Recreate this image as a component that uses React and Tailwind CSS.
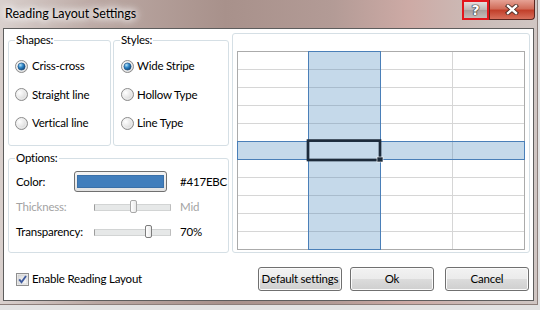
import React from "react";

const Radio = ({ checked, id }) => (
  <svg width="13" height="13" viewBox="0 0 13 13" className="shrink-0">
    <defs>
      <radialGradient id={`${id}-bg`} cx="0.35" cy="0.35" r="0.75">
        <stop offset="0" stopColor="#ffffff" />
        <stop offset="0.6" stopColor="#e4e4e4" />
        <stop offset="1" stopColor="#c8c8c8" />
      </radialGradient>
      <radialGradient id={`${id}-dot`} cx="0.35" cy="0.3" r="0.8">
        <stop offset="0" stopColor="#b5e4fb" />
        <stop offset="0.45" stopColor="#2f86c7" />
        <stop offset="1" stopColor="#0c3c6e" />
      </radialGradient>
    </defs>
    <circle cx="6.5" cy="6.5" r="6" fill={`url(#${id}-bg)`} stroke="#8c8c8c" />
    <circle cx="6.5" cy="6.5" r="4.6" fill="none" stroke="#f4f4f4" strokeWidth="0.8" />
    {checked && (
      <circle cx="6.5" cy="6.5" r="3.6" fill={`url(#${id}-dot)`} stroke="#1a4a7a" strokeWidth="0.6" />
    )}
  </svg>
);

const Option = ({ id, label, checked, gap = "gap-[4px]" }) => (
  <div className={`flex items-center h-[16px] ${gap}`}>
    <Radio id={id} checked={checked} />
    <span className="leading-[16px] whitespace-nowrap">{label}</span>
  </div>
);

const Group = ({ label, className = "", children }) => (
  <fieldset className={`border border-[#d5dfe5] rounded-[3px] min-w-0 ${className}`}>
    <legend className="ml-[6px] px-[1px] leading-[16px]">{label}</legend>
    {children}
  </fieldset>
);

const Slider = ({ pos, disabled }) => (
  <div className="relative w-[77px] h-[16px] flex items-center">
    <div className="w-full h-[7px] bg-[#e6e8e8] border border-[#d2d4d4] border-l-[#9c9c9c] border-r-[#bdbdbd]" />
    <div
      className={`absolute top-[1px] ${pos} w-[7px] h-[13px] rounded-[2px] border ${
        disabled ? "border-[#a8a8a8]" : "border-[#7c7c7c]"
      } bg-[linear-gradient(90deg,#ffffff,#e9e9e9)]`}
    />
  </div>
);

const Btn = ({ children }) => (
  <button className="h-[24px] w-[84px] rounded-[3px] border border-[#707070] bg-[linear-gradient(#f2f2f2_0%,#ebebeb_50%,#dcdcdc_50%,#cfcfcf_100%)] shadow-[inset_0_0_0_1px_#fbfbfb] leading-none whitespace-nowrap">
    {children}
  </button>
);

const Preview = () => {
  const rows = Array.from({ length: 10 }, (_, i) => (i + 1) * 18);
  const cols = [71, 143, 215];
  return (
    <svg width="288" height="199" viewBox="0 0 288 199">
      <rect x="0" y="0" width="288" height="199" fill="#ffffff" />
      <rect x="71" y="0" width="73" height="199" fill="#c5d9ea" />
      <rect x="0" y="90" width="288" height="19" fill="#c5d9ea" />
      {rows.map((y) => (
        <g key={y}>
          <line x1="0" x2="288" y1={y + 0.5} y2={y + 0.5} stroke="#d6d6d6" />
          <line x1="72" x2="143" y1={y + 0.5} y2={y + 0.5} stroke="#a9bccd" />
        </g>
      ))}
      {cols.map((x) => (
        <g key={x}>
          <line x1={x + 0.5} x2={x + 0.5} y1="0" y2="199" stroke="#d6d6d6" />
          <line x1={x + 0.5} x2={x + 0.5} y1="91" y2="108" stroke="#a9bccd" />
        </g>
      ))}
      <rect x="0.5" y="0.5" width="287" height="198" fill="none" stroke="#ababab" />
      <g stroke="#4a7fb8" fill="none">
        <rect x="71.5" y="0.5" width="72" height="198" />
        <rect x="0.5" y="90.5" width="287" height="18" />
      </g>
      <rect x="71" y="89.6" width="72" height="19.4" fill="none" stroke="#1c2a3a" strokeWidth="2.7" />
      <rect x="140" y="106" width="6" height="5" fill="#1c2a3a" stroke="#ffffff" strokeWidth="0.6" />
    </svg>
  );
};

export default function App() {
  return (
    <div className="w-[540px] h-[310px] overflow-hidden bg-[#e2e2e2] font-['Lato',sans-serif] text-[11.5px] tracking-[-0.2px] text-black">
      <div className="w-[538px] h-[305px] flex flex-col bg-[linear-gradient(90deg,#d9d0cd_0%,#bba8a3_18%,#a8918b_42%,#b39b96_62%,#cdaaa5_76%,#cbbdb9_90%,#d0c6c3_100%)] border-r border-b border-[#8d7f7b]">
        {/* Title bar */}
        <div className="h-[28px] flex items-start shrink-0">
          <div className="pl-[5px] pt-[5px] text-[12.5px] tracking-normal leading-[18px] [text-shadow:0_0_6px_#ffffff,0_0_10px_#ffffff,0_0_12px_#ffffff]">
            Reading Layout Settings
          </div>
          <div className="ml-auto mr-[2px] flex">
            <div className="w-[27px] h-[20px] border-2 border-[#e3161d] bg-[linear-gradient(#e4dedd,#bdb3b1_50%,#a79d9b_51%,#c3bbb9)] flex items-center justify-center">
              <span className="text-white font-bold text-[14px] leading-none font-['DejaVu_Sans',sans-serif] [text-shadow:0_0_1px_#333,0_0_1px_#333,0_0_1px_#333,0_0_1px_#333]">
                ?
              </span>
            </div>
            <div className="w-[46px] h-[20px] rounded-br-[4px] border border-[#5b2620] border-t-0 bg-[linear-gradient(#e6a295,#d16d5a_45%,#c2402b_55%,#d8705c)] flex items-center justify-center">
              <svg width="14" height="11" viewBox="0 0 14 11">
                <g strokeLinecap="square">
                  <path d="M3 2 L11 9 M11 2 L3 9" stroke="#4a2a24" strokeWidth="4.2" />
                  <path d="M3 2 L11 9 M11 2 L3 9" stroke="#ffffff" strokeWidth="2.4" />
                </g>
              </svg>
            </div>
          </div>
        </div>

        {/* Client area */}
        <div className="ml-[3px] w-[531px] h-[273px] bg-white border border-[#5d5d5d] flex flex-col">
          <div className="flex pt-[3px] pl-[4px] pr-[3px]">
            <div className="w-[221px] flex flex-col">
              <div className="flex gap-[2px]">
                <Group label="Shapes:" className="w-[103px] h-[114px]">
                  <div className="flex flex-col pt-[10px] pl-[6px] gap-[12.5px]">
                    <Option id="s1" label="Criss-cross" checked />
                    <Option id="s2" label="Straight line" />
                    <Option id="s3" label="Vertical line" />
                  </div>
                </Group>
                <Group label="Styles:" className="w-[116px] h-[114px]">
                  <div className="flex flex-col pt-[10px] pl-[7px] gap-[12.5px]">
                    <Option id="t1" label="Wide Stripe" checked gap="gap-[3px]" />
                    <Option id="t2" label="Hollow Type" gap="gap-[3px]" />
                    <Option id="t3" label="Line Type" gap="gap-[3px]" />
                  </div>
                </Group>
              </div>
              <Group label="Options:" className="mt-[4px] w-full h-[103px]">
                <div className="flex flex-col pl-[7px]">
                  <div className="flex items-center h-[21px] mt-[5px]">
                    <span className="w-[58px]">Color:</span>
                    <div className="w-[93px] h-[21px] rounded-[3px] border border-[#707070] bg-[linear-gradient(#f4f4f4,#e2e2e2)] flex items-center justify-center">
                      <div className="w-[87px] h-[13px] bg-[#417EBC] border border-[#3a70a8]" />
                    </div>
                    <span className="ml-[13px]">#417EBC</span>
                  </div>
                  <div className="flex items-center h-[16px] mt-[7px] text-[#a3a3a3]">
                    <span className="w-[78px]">Thickness:</span>
                    <Slider pos="left-[36px]" disabled />
                    <span className="ml-[9px]">Mid</span>
                  </div>
                  <div className="flex items-center h-[16px] mt-[9px]">
                    <span className="w-[78px]">Transparency:</span>
                    <Slider pos="left-[51px]" />
                    <span className="ml-[9px]">70%</span>
                  </div>
                </div>
              </Group>
            </div>
            <div className="ml-[3px] mt-[1px] w-[298px] h-[220px] border border-[#d5dfe5] rounded-[3px] pl-[4px] pt-[17px]">
              <Preview />
            </div>
          </div>

          <div className="flex items-center mt-[14px] h-[24px] pl-[12px] pr-[4px]">
            <div className="flex items-center gap-[3px]">
              <svg width="13" height="13" viewBox="0 0 13 13">
                <defs>
                  <linearGradient id="cb" x1="0" y1="0" x2="1" y2="1">
                    <stop offset="0" stopColor="#d9d9d9" />
                    <stop offset="1" stopColor="#fbfbfb" />
                  </linearGradient>
                </defs>
                <rect x="0.5" y="0.5" width="12" height="12" fill="#f5f5f5" stroke="#8f8f8f" />
                <rect x="2" y="2" width="9" height="9" fill="url(#cb)" stroke="#c4c4c4" strokeWidth="0.6" />
                <path d="M3.2 6.4 L5.5 9.2 L10 3" fill="none" stroke="#3e5a9e" strokeWidth="1.9" />
              </svg>
              <span>Enable Reading Layout</span>
            </div>
            <div className="ml-auto flex">
              <Btn>Default settings</Btn>
              <div className="ml-[8px]">
                <Btn>Ok</Btn>
              </div>
              <div className="ml-[11px]">
                <Btn>Cancel</Btn>
              </div>
            </div>
          </div>
        </div>
      </div>
    </div>
  );
}
